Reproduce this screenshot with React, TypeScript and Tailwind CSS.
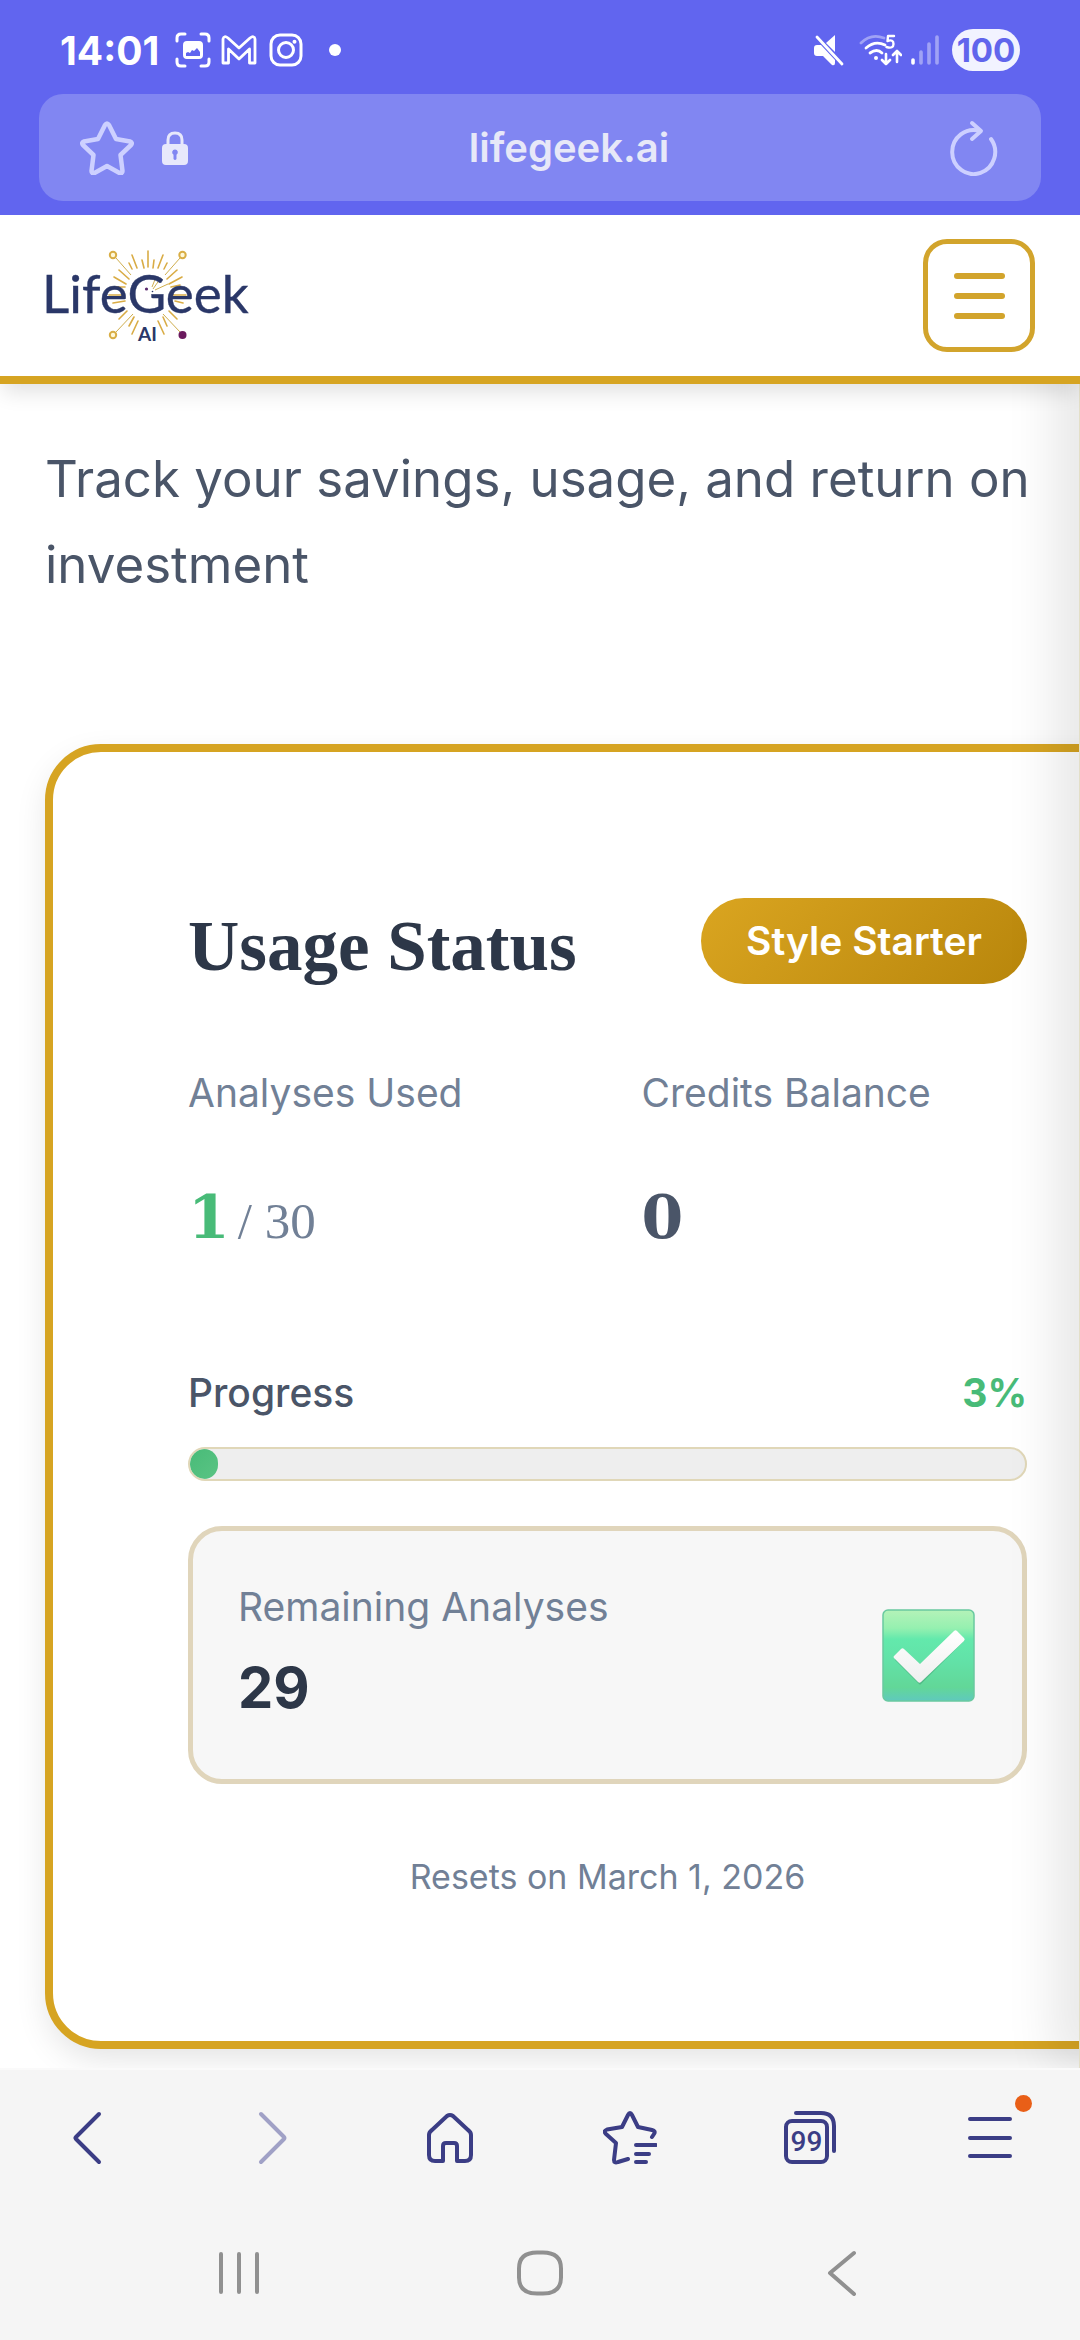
const STROKE = {
  fill: "none",
  stroke: "currentColor",
  strokeLinecap: "round",
  strokeLinejoin: "round",
} as const;

const RAYS = [
  "M104 3v16",
  "M88 7l5 13",
  "M119 7l-5 13",
  "M85 15l3 6",
  "M98 12l2 8",
  "M110 12l-1 8",
  "M123 15l-3 6",
  "M75 22l10 9",
  "M133 22l-10 9",
  "M70 29l12 7",
  "M138 29l-13 7",
  "M70 39h11",
  "M127 39l9-2",
  "M65 47h13",
  "M129 47h13",
  "M69 55l12-2",
  "M131 53l8 2",
  "M75 71l8-8",
  "M133 71l-8-8",
  "M85 78l5-9",
  "M123 78l-4-9",
  "M88 86l6-13",
  "M120 86l-6-13",
];

function Logo() {
  return (
    <svg viewBox="-8 -1 228 98" className="h-[98px] w-[228px]" role="img" aria-label="LifeGeek AI">
      <g stroke="#d9ac45" strokeWidth="1.6" strokeLinecap="round">
        {RAYS.map((d) => (
          <path key={d} d={d} />
        ))}
      </g>
      <g stroke="#cfae4e" strokeWidth="1" fill="none">
        <path d="M72 10l15 17M136 10l-15 17M72 84l17-18M136 84l-17-18" />
        <path d="M112 29l-4 10M116 31l-7 10M124 36l-13 6" />
      </g>
      <g fill="#fff8d8" stroke="#d9ae45" strokeWidth="2">
        <circle cx="69" cy="7" r="3.2" />
        <circle cx="138.500" cy="7" r="3.2" />
        <circle cx="69" cy="87" r="3.2" />
      </g>
      <circle cx="138.500" cy="87" r="4" fill="#6b1a5e" />
      <text
        x="-2"
        y="65"
        fontSize="53"
        fill="#2a3768"
        stroke="#2a3768"
        strokeWidth="0.4"
        className="font-[Lato,sans-serif]"
      >
        LifeGeek
      </text>
      <circle cx="102.500" cy="41" r="1.6" fill="#5b2a6e" />
      <circle cx="108.500" cy="43.500" r="0.8" fill="#2a3768" />
      <text x="94" y="93" fontSize="19" fontWeight="700" fill="#2a3768" className="font-[Lato,sans-serif]">
        AI
      </text>
    </svg>
  );
}

function StatusBar() {
  return (
    <div className="flex h-[94px] items-center justify-between pt-1.5 pr-[60px] pl-[60px]">
      <div className="flex items-center">
        <span className="mr-4 text-[39px] leading-none font-bold">14:01</span>
        {/* screenshot */}
        <svg viewBox="0 0 36 36" className="mr-[10px] h-9 w-9" {...STROKE} strokeWidth="3">
          <path d="M2 9V6q0-4 4-4h4M26 2h4q4 0 4 4v3M34 27v3q0 4-4 4h-4M10 34H6q-4 0-4-4v-3" />
          <path
            fill="currentColor"
            stroke="none"
            fillRule="evenodd"
            d="M12 9h12q4 0 4 4v10q0 4-4 4H12q-4 0-4-4V13q0-4 4-4zm-1 12v3h14v-4l-3-4-3 3-2-1-2 3-2-1z"
          />
        </svg>
        {/* gmail */}
        <svg viewBox="0 0 36 30" className="mr-[12px] h-[30px] w-9" {...STROKE} strokeWidth="2.8">
          <path d="M2 28V4q1-4 5-1l11 10L29 3q4-3 5 1v24h-5.500V14L18 24 7.500 14v14z" />
        </svg>
        {/* instagram */}
        <svg viewBox="0 0 34 34" className="mr-[26px] h-[34px] w-[34px]" {...STROKE} strokeWidth="3">
          <rect x="2" y="2" width="30" height="30" rx="9" />
          <circle cx="17" cy="17" r="7.500" />
          <circle cx="25.500" cy="8.800" r="2" fill="currentColor" stroke="none" />
        </svg>
        <span className="h-3 w-3 rounded-full bg-white" />
      </div>
      <div className="flex items-center">
        {/* muted speaker */}
        <svg viewBox="0 0 30 31" className="mr-[15px] h-[31px] w-[30px]" fill="currentColor">
          <path d="M12 8l9-8v17z" />
          <path d="M0 13q0-3 3-3h4l14 15v3q0 3-3 2L9 21H3q-3 0-3-3z" />
          <path d="M3 2l25 27" stroke="currentColor" strokeWidth="2.800" strokeLinecap="round" />
        </svg>
        {/* wifi 5 with traffic arrows */}
        <svg viewBox="0 0 43 32" className="mr-[9px] h-8 w-[43px]" {...STROKE} strokeWidth="2.800">
          <path d="M2 9Q12-1 25 4" opacity=".4" />
          <path d="M7 14q9-8 19-3M11 19q7-5 12 0" />
          <circle cx="17" cy="24" r="2" fill="currentColor" stroke="none" />
          <path d="M35 2h-6l-.500 5q6-2 6 3t-7 3" strokeWidth="2.400" />
          <path d="M27 20v10m-4-4l4 4 4-4M38 28V17m-4 4l4-4 4 4" strokeWidth="2.600" />
        </svg>
        {/* cell signal */}
        <svg viewBox="0 0 28 30" className="mr-[13px] h-[30px] w-7" {...STROKE} strokeWidth="3.600">
          <path d="M2 25v3" />
          <path d="M10 17v11M18 9v19M26 2v26" opacity=".4" />
        </svg>
        <span className="flex h-[42px] w-[68px] items-center justify-center rounded-full bg-[#f2f3ff] text-[33px] leading-none font-bold text-[#6165ec]">
          100
        </span>
      </div>
    </div>
  );
}

function AddressBar() {
  return (
    <div className="mx-[39px] flex h-[107px] items-center rounded-[24px] bg-[#8186f2] pr-[43px] pl-[41px]">
      <button type="button" aria-label="Bookmark" className="mr-[28px] text-[#cdd0ff]">
        <svg viewBox="0 0 54 54" className="h-[54px] w-[54px]" {...STROKE} strokeWidth="4.500">
          <path d="M25 4q2-3 4 0l7 14 14 2.500q3 1 1 3.500L40.500 34l2 16q0 3-3 2L27 45l-12.500 7q-3 1-3-2l2-16L3 24q-2-2.500 1-3.500L18 18z" />
        </svg>
      </button>
      <svg viewBox="0 0 26 34" className="h-[34px] w-[26px] text-[#e7e8fb]" aria-hidden="true">
        <path d="M6 15V9q0-7 7-7t7 7v6" fill="none" stroke="currentColor" strokeWidth="3" />
        <path
          fill="currentColor"
          fillRule="evenodd"
          d="M4 13h18q4 0 4 4v13q0 4-4 4H4q-4 0-4-4V17q0-4 4-4zm9 5.500a2.800 2.800 0 0 0-1.500 5.200V28q1.500 2 3 0v-4.300a2.800 2.800 0 0 0-1.500-5.200z"
        />
      </svg>
      <input
        type="text"
        aria-label="Address"
        defaultValue="lifegeek.ai"
        className="w-full min-w-0 flex-1 bg-transparent text-center text-[40px] font-semibold text-[#e7e8f8] outline-none"
      />
      <button type="button" aria-label="Reload" className="text-[#cdd0ff]">
        <svg viewBox="0 0 48 56" className="h-14 w-12" {...STROKE} strokeWidth="4">
          <path d="M41 19A21.500 22 0 1 1 30 11" />
          <path d="M22 3l9 8-9 8" />
        </svg>
      </button>
    </div>
  );
}

function SiteHeader() {
  return (
    <header className="relative z-10 flex items-center justify-between border-b-8 border-[#d6a422] bg-white py-6 pr-[45px] pl-9 shadow-[0_11px_20px_-3px_rgba(0,0,0,0.12)]">
      <a href="/" aria-label="LifeGeek AI home">
        <Logo />
      </a>
      <button
        type="button"
        aria-label="Open menu"
        className="flex h-[113px] w-[112px] flex-col items-center justify-center gap-[14px] rounded-[24px] border-[5px] border-[#d2a42c]"
      >
        <span className="h-1.5 w-[51px] rounded-full bg-[#d2a42c]" />
        <span className="h-1.5 w-[51px] rounded-full bg-[#d2a42c]" />
        <span className="h-1.5 w-[51px] rounded-full bg-[#d2a42c]" />
      </button>
    </header>
  );
}

function CheckMark() {
  return (
    <svg viewBox="-2 -3 96 96" className="h-24 w-24" aria-hidden="true">
      <defs>
        <linearGradient id="tile" x1="0" y1="0" x2="0" y2="1">
          <stop offset="0" stopColor="#b4f2b8" />
          <stop offset="0.200" stopColor="#95f0b0" />
          <stop offset="0.320" stopColor="#63e9ac" />
          <stop offset="0.550" stopColor="#62e2a8" />
          <stop offset="0.850" stopColor="#62d798" />
          <stop offset="1" stopColor="#5fc9bd" />
        </linearGradient>
        <linearGradient id="tick" x1="0" y1="0" x2="0" y2="1">
          <stop offset="0" stopColor="#fff" />
          <stop offset="1" stopColor="#efefef" />
        </linearGradient>
      </defs>
      <rect x="0" y="0" width="91" height="91" rx="5" fill="url(#tile)" stroke="#69c9a0" strokeWidth="1.500" />
      <path d="M12 49l8-8q1-1 2 0l15 15 35-34q1-1 2 0l7 7q1 1 0 2L38 74q-1 1-2 0L12 50z" fill="#3f9c72" opacity=".5" />
      <path d="M11 46l7-7q1.500-1.500 3 0l16 15 34-33q1.500-1.500 3 0l7 7q1.500 1.500 0 3L38 72q-1.500 1.500-3 0L11 48q-1-1 0-2z" fill="url(#tick)" />
    </svg>
  );
}

function UsageCard({ used, total, credits }: { used: number; total: number; credits: number }) {
  const percent = (used / total) * 100;

  return (
    <section className="mt-[136px] -mr-[135px] rounded-[56px] border-8 border-[#d6a422] bg-white p-[135px] shadow-[0_12px_34px_-4px_rgba(0,0,0,0.12)]">
      <div className="flex items-start justify-between">
        <h2 className="font-['Liberation_Serif',serif] text-[71px] leading-[118px] font-bold whitespace-nowrap text-[#2d3748]">
          Usage Status
        </h2>
        <span className="mt-[11px] rounded-full bg-linear-135 from-[#daa520] to-[#b8860b] px-[45px] text-[39px] leading-[86px] font-semibold whitespace-nowrap text-white">
          Style Starter
        </span>
      </div>

      <div className="mt-[54px] grid grid-cols-2 gap-[68px]">
        <div>
          <p className="text-[39px] leading-[67px] text-[#718096]">Analyses Used</p>
          <p className="mt-[41px] flex items-baseline gap-2 font-['DejaVu_Serif',serif] text-[60px] leading-[100px] font-bold text-[#48bb78]">
            {used}
            <span className="font-['Liberation_Serif',serif] text-[51px] leading-none font-normal text-[#718096]">
              / {total}
            </span>
          </p>
        </div>
        <div>
          <p className="text-[39px] leading-[67px] text-[#718096]">Credits Balance</p>
          <p className="mt-[41px] font-['DejaVu_Serif',serif] text-[60px] leading-[100px] font-bold text-[#4a5568]">
            {credits}
          </p>
        </div>
      </div>

      <div className="mt-[92px] flex justify-between text-[39px] leading-[67px]">
        <span className="font-medium text-[#4a5568]">Progress</span>
        <span className="font-bold text-[#48bb78]">{Math.round(percent)}%</span>
      </div>
      <div className="mt-[21px] h-[34px] overflow-hidden rounded-full border-2 border-[#e0d7b8] bg-[#eeeeee]">
        <div
          className="h-full rounded-full bg-linear-135 from-[#48bb78] to-[#5ac484]"
          style={{ width: `${percent}%` }}
        />
      </div>

      <div className="mt-[45px] flex items-center justify-between rounded-[34px] border-[5px] border-[#e0d5bb] bg-[#f7f7f7] px-[45px] py-[42px]">
        <div>
          <p className="text-[39px] leading-[67px] text-[#718096]">Remaining Analyses</p>
          <p className="text-[56px] leading-[97px] font-bold text-[#2d3748]">{total - used}</p>
        </div>
        <CheckMark />
      </div>

      <p className="mt-[64px] text-center text-[34px] leading-[58px] text-[#718096]">Resets on March 1, 2026</p>
    </section>
  );
}

function BrowserToolbar() {
  return (
    <nav aria-label="Browser" className="grid h-[136px] grid-cols-6 place-items-center text-[#3b3d85]">
      <button type="button" aria-label="Back">
        <svg viewBox="0 0 54 54" className="h-[54px] w-[54px]" {...STROKE} strokeWidth="4">
          <path d="M36 3L13 26q-1 1 0 2l23 23" />
        </svg>
      </button>
      <button type="button" aria-label="Forward" className="text-[#a0a1c6]">
        <svg viewBox="0 0 54 54" className="h-[54px] w-[54px]" {...STROKE} strokeWidth="4">
          <path d="M18 3l23 23q1 1 0 2L18 51" />
        </svg>
      </button>
      <button type="button" aria-label="Home">
        <svg viewBox="0 0 54 54" className="h-[54px] w-[54px]" {...STROKE} strokeWidth="4">
          <path d="M20 50v-15q0-3 3-3h8q3 0 3 3v15h8q6 0 6-6V24q0-3-3-5L30 5q-3-2-6 0L9 19q-3 2-3 5v20q0 6 6 6z" />
        </svg>
      </button>
      <button type="button" aria-label="Bookmarks">
        <svg viewBox="0 0 54 54" className="h-[54px] w-[54px]" {...STROKE} strokeWidth="4">
          <path d="M25 48l-10 3q-4 1.500-4-2l2-17L3 23q-3-3 1-4.500L19 16l6-12q2-4 4 0l6 12 14 3q4 1 2 4l-2 3" />
          <path d="M33 34h20M33 43h13M33 51h10" />
        </svg>
      </button>
      <button type="button" aria-label="Tabs" className="relative">
        <svg viewBox="0 0 54 54" className="h-[54px] w-[54px]" {...STROKE} strokeWidth="4">
          <rect x="3" y="10" width="41" height="41" rx="6" />
          <path d="M13 2h25q13 0 13 13v25" />
        </svg>
        <span className="absolute inset-x-0 top-[11px] pr-[7px] text-center font-[Roboto,sans-serif] text-[28px] leading-[40px] font-medium">
          99
        </span>
      </button>
      <button type="button" aria-label="More" className="relative">
        <svg viewBox="0 0 54 54" className="h-[54px] w-[54px]" {...STROKE} strokeWidth="4">
          <path d="M7 8h40M7 27h40M7 45h40" />
        </svg>
        <span className="absolute -top-4 -right-[15px] h-[17px] w-[17px] rounded-full bg-[#e95f17]" />
      </button>
    </nav>
  );
}

function SystemNav() {
  return (
    <nav aria-label="System" className="grid h-[134px] grid-cols-3 place-items-center px-[88px] text-[#909090]">
      <button type="button" aria-label="Recents">
        <svg viewBox="0 0 46 46" className="h-[46px] w-[46px]" {...STROKE} strokeWidth="4">
          <path d="M5 4v38M23 4v38M41 4v38" />
        </svg>
      </button>
      <button type="button" aria-label="Home screen">
        <svg viewBox="0 0 46 46" className="h-[46px] w-[46px]" {...STROKE} strokeWidth="4">
          <path d="M23 2.500h3q18 0 18 16v9q0 16-18 16h-6q-18 0-18-16v-9q0-16 18-16z" />
        </svg>
      </button>
      <button type="button" aria-label="System back">
        <svg viewBox="0 0 46 46" className="h-[46px] w-[46px]" {...STROKE} strokeWidth="4">
          <path d="M36 3L12 23l24 21" />
        </svg>
      </button>
    </nav>
  );
}

export default function App() {
  return (
    <div className="flex min-h-screen flex-col bg-white font-[Inter,sans-serif]">
      <div className="bg-[#6165ef] pb-3.5 text-white">
        <StatusBar />
        <AddressBar />
      </div>

      <div className="relative flex-1 overflow-hidden">
        <SiteHeader />
        <main className="px-[45px] pt-[52px] pb-[17px]">
          <p className="text-[51px] leading-[86px] text-[#4a5568]">
            Track your savings, usage, and return on investment
          </p>
          <UsageCard used={1} total={30} credits={0} />
        </main>

        {/* closed drawer, only its shadow shows */}
        <aside
          aria-hidden="true"
          className="absolute inset-y-0 left-full -ml-px w-10 border-l border-[#e3dfc8] bg-white shadow-[-14px_0_56px_rgba(0,0,0,0.15)]"
        />
      </div>

      <footer className="border-t-2 border-[#fafafa] bg-[#f5f5f5]">
        <BrowserToolbar />
        <SystemNav />
      </footer>
    </div>
  );
}
